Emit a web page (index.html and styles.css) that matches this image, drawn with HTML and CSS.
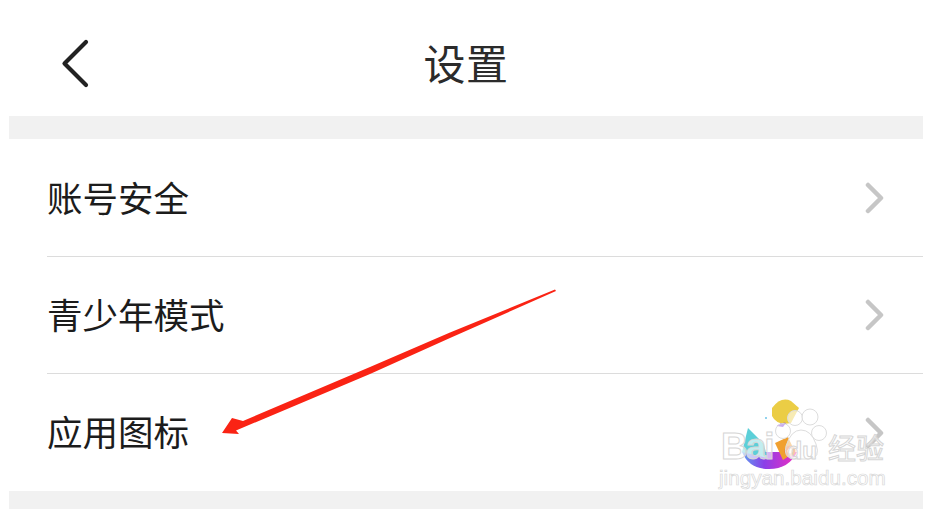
FILE: index.html
```html
<!DOCTYPE html>
<html lang="zh-CN">
<head>
  <meta charset="UTF-8" />
  <meta name="viewport" content="width=device-width, initial-scale=1" />
  <title>设置</title>
  <link rel="stylesheet" href="styles.css">
</head>
<body>

  <div class="page">
    <header class="topbar">
      <svg class="back-icon" width="30" height="50" viewBox="0 0 30 50">
        <path d="M25 3 L3.5 24.5 L25 46" />
      </svg>
      <h1>设置</h1>
    </header>

    <div class="band"></div>

    <ul class="menu">
      <li class="menu-row">
        <span>账号安全</span>
        <svg class="chevron" width="20" height="32" viewBox="0 0 20 32"><path d="M3 3 L16 16 L3 29" /></svg>
      </li>
      <li class="menu-row">
        <span>青少年模式</span>
        <svg class="chevron" width="20" height="32" viewBox="0 0 20 32"><path d="M3 3 L16 16 L3 29" /></svg>
      </li>
      <li class="menu-row">
        <span>应用图标</span>
        <svg class="chevron" width="20" height="32" viewBox="0 0 20 32"><path d="M3 3 L16 16 L3 29" /></svg>
      </li>
    </ul>

    <div class="band band-bottom"></div>
  </div>

  <!-- red arrow drawn on top of the screenshot -->
  <svg class="annotation" width="938" height="509" viewBox="0 0 938 509">
    <polygon points="555,289.5 450,332.5 370,367 243,421 232,418 222,433 239,434 236,430.5 370,374 450,338 556,291" fill="#fa2314" />
  </svg>

  <div class="watermark">
    <svg class="wm-logo" width="100" height="100" viewBox="0 0 100 100">
      <defs>
        <linearGradient id="bowl" x1="0" y1="0" x2="1" y2="0">
          <stop offset="0" stop-color="#5f9cf0" />
          <stop offset="0.4" stop-color="#8a3fe8" />
          <stop offset="1" stop-color="#f02cc0" />
        </linearGradient>
      </defs>
      <path d="M33 12 Q42 0 52 5 L60 12 L52 27 Q38 30 33 20 Z" fill="#ebcd45" />
      <path d="M38 30 Q42 26 47 27 L44 31 Z" fill="#7a35d8" />
      <circle cx="27" cy="22" r="1" fill="#6cc4e8" />
      <path d="M3 56 H58 Q50 73 30 73 Q10 73 3 56 Z" fill="url(#bowl)" />
      <path d="M9 32 L25 48 L28 62 L3 56 Z" fill="#5ccfd8" />
      <path d="M36 47 L49 41 L56 56 L44 64 Z" fill="#f0a030" />
      <circle cx="51" cy="55" r="4" fill="#fff" stroke="#e8702a" stroke-width="3" />
    </svg>
    <svg class="wm-paw" width="60" height="70" viewBox="0 0 60 70">
      <circle cx="22" cy="14" r="7.5" />
      <circle cx="37" cy="13" r="8" />
      <circle cx="10" cy="27" r="7.5" />
      <circle cx="46" cy="29" r="7.5" />
      <path d="M28 26 Q38 26 43 40 Q48 54 36 55 L20 55 Q10 53 13 42 Q18 26 28 26 Z" />
    </svg>
    <div class="wm-brand"><span>Bai</span><span class="wm-du">du</span><span class="wm-cn">经验</span></div>
    <div class="wm-url">jingyan.baidu.com</div>
  </div>

</body>
</html>
```

FILE: styles.css
```css
* {
  box-sizing: border-box;
}

html, body {
  margin: 0;
  padding: 0;
  height: 509px;
  overflow: hidden;
  background: #fff;
}

body {
  position: relative;
  font-family: "Noto Sans CJK SC", "Noto Sans", sans-serif;
  color: #1c1c1c;
}

.page {
  display: flex;
  flex-direction: column;
  height: 509px;
  padding: 0 15px 0 9px;
}

.topbar {
  position: relative;
  flex: 0 0 116px;
  display: flex;
  align-items: center;
  justify-content: center;
  padding: 8px 0 0 0;
}

.topbar h1 {
  margin: 0;
  font-size: 42px;
  font-weight: 400;
  line-height: 60px;
  color: #2b2b2b;
  letter-spacing: 0.5px;
}

.back-icon {
  position: absolute;
  left: 52px;
  top: 39px;
}

.back-icon path {
  fill: none;
  stroke: #222;
  stroke-width: 4.2;
  stroke-linecap: round;
  stroke-linejoin: round;
}

.band {
  flex: 0 0 23px;
  background: #f1f1f1;
}

.band-bottom {
  flex: 0 0 18px;
}

.menu {
  flex: 1;
  margin: 0;
  padding: 1px 0 0 38px;
  list-style: none;
}

.menu-row {
  display: flex;
  align-items: center;
  justify-content: space-between;
  height: 117px;
  padding-right: 38px;
  border-bottom: 1px solid #dcdcdc;
  font-size: 35.5px;
  line-height: 50px;
}

.menu-row span {
  padding-bottom: 3px;
}

.menu-row:last-child {
  border-bottom: none;
}

.chevron path {
  fill: none;
  stroke: #c6c6c6;
  stroke-width: 4.5;
  stroke-linecap: round;
  stroke-linejoin: round;
}

.annotation {
  position: absolute;
  left: 0;
  top: 0;
}

.watermark {
  position: absolute;
  left: 718px;
  top: 396px;
  width: 170px;
  height: 95px;
}

.wm-logo {
  position: absolute;
  left: 21px;
  top: 0;
}

.wm-paw {
  position: absolute;
  left: 55px;
  top: 8px;
}

.wm-paw circle,
.wm-paw path {
  fill: rgba(255, 255, 255, 0.6);
  stroke: #ddd;
  stroke-width: 1;
}

.wm-brand {
  position: absolute;
  left: 3px;
  top: 29px;
  display: flex;
  align-items: baseline;
  font-family: "Liberation Sans", sans-serif;
  font-size: 37px;
  font-weight: 700;
  line-height: 44px;
  letter-spacing: -2px;
  color: rgba(255, 255, 255, 0.65);
  -webkit-text-stroke: 1px #d6d6d6;
}

.wm-du {
  margin-left: 15px;
  font-size: 24px;
  letter-spacing: 0;
}

.wm-cn {
  margin-left: 11px;
  font-family: "Noto Sans CJK SC", sans-serif;
  font-size: 28px;
  font-weight: 400;
  letter-spacing: 0;
}

.wm-url {
  position: absolute;
  left: 1px;
  top: 70px;
  font-family: "Liberation Sans", sans-serif;
  font-size: 20.7px;
  line-height: 24px;
  color: #fff;
  -webkit-text-stroke: 0.7px #d8d8d8;
}
```
